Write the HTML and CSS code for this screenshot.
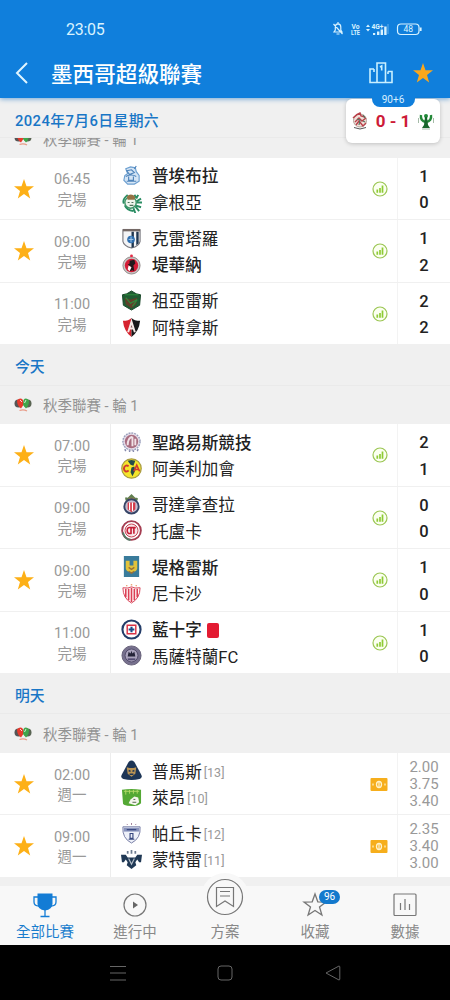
FILE: index.html
```
<!DOCTYPE html>
<html lang="zh-Hant">
<head>
<meta charset="utf-8">
<title>墨西哥超級聯賽</title>
<link rel="stylesheet" href="styles.css">
</head>
<body>
<svg class="defs" aria-hidden="true">
  <symbol id="star" viewBox="0 0 20 20"><path fill="currentColor" d="M10 0l2.500 7.200 7.500.1-6 4.700 2.200 7.500L10 15.100 3.800 19.500 6 12 0 7.300l7.500-.1z"/></symbol>
  <symbol id="stats" viewBox="0 0 16 16"><circle cx="8" cy="8" r="7" fill="#fbfff0" stroke="#9bc653" stroke-width="1.200"/><path d="M5.300 8.500v3.300M8 7v4.800M10.500 4.500v7.300" stroke="#8ecb35" stroke-width="1.700"/></symbol>
  <symbol id="cash" viewBox="0 0 18 13"><rect x=".5" width="17" height="13" rx="1" fill="#f6ae1c"/><ellipse cx="9" cy="6.500" rx="2.500" ry="3" fill="none" stroke="#fff3cd" stroke-width="1.300"/><path d="M9 3v7M3 5.500v2M15 5.500v2" stroke="#fff3cd" stroke-width="1.200"/></symbol>
  <symbol id="liga" viewBox="0 0 18 16"><circle cx="4.500" cy="6.500" r="4" fill="#555"/><circle cx="13.500" cy="6.500" r="4" fill="#596452"/><path d="M3 3.500Q6 0 9 3l1 4-3 4.500Q3 9 3 3.500z" fill="#e63a2d"/><path d="M15 3.500Q12 0 9.500 3L9 8l3 3.500q3-2.500 3-8z" fill="#40a54a"/><path d="M6 3l2 2M12 3l-1.500 3" stroke="#fff" stroke-width=".8"/><path d="M5.500 13.500q4-1.500 7.500.5" stroke="#e99b87" stroke-width="1.300" fill="none"/></symbol>

  <symbol id="puebla" viewBox="0 0 22 22"><path d="M5 4l5-2 5 1 1 4 3 4v6l-5 3H7l-4-4 1-5 3-2z" fill="#d5e5f5" stroke="#6c9fd0" stroke-width="1.200"/><path d="M6 6l5-1 3 3-5 2zM5 12q6-3 11 0M6 17h10M8 12v4h5v-4M14 4l2-3" fill="none" stroke="#4e83b9" stroke-width="1.200"/></symbol>
  <symbol id="santos" viewBox="0 0 22 22"><path d="M7 3Q1 8 3 12M4 14q2 5 9 6M14 3l2 3M18 3l-2 4M21 7l-5 3M22 11h-6M21 16l-6-2M19 20l-4-5M15 22l-2-5" fill="none" stroke="#2a8d63" stroke-width="2"/><circle cx="10" cy="11" r="6" fill="#eef5ec" stroke="#3d9568" stroke-width="1.500"/><path d="M6 5q4-5 9 0l-1 3H7z" fill="#947244"/><path d="M7 11h2M11 11h2M9 14h4" stroke="#4c725a" stroke-width="1.300"/></symbol>
  <symbol id="queretaro" viewBox="0 0 22 22"><path d="M2 2h18v12q-1 5-9 7-8-2-9-7z" fill="#f3f4f6" stroke="#7b7a80" stroke-width="1.200"/><path d="M2 1h18v2.500H2z" fill="#746966"/><path d="M11 4h2.500v16L11 21zM16 4h2.500v12L16 18z" fill="#20364f"/><circle cx="10.500" cy="12" r="4" fill="#2d6eaf"/><path d="M8 12h5M10.500 9v6" stroke="#a9cae8"/></symbol>
  <symbol id="tijuana" viewBox="0 0 22 22"><circle cx="11" cy="12" r="9" fill="#c9c3c2" stroke="#918b8b"/><circle cx="11" cy="12" r="7" fill="#d51c37"/><path d="M9 7l5-1 1 4-2 2 1 6-2-1-3 1 1-5-3-2 2-1z" fill="#211a1c"/><path d="M8 12l3 2-2 4-2-2z" fill="#fff"/><circle cx="11" cy="2" r="1.500" fill="#e52943"/></symbol>
  <symbol id="juarez" viewBox="0 0 22 22"><path d="M1.500 5l4.500-1 5-3 5 3 4.500 1-1 11-8.500 5-8.500-5z" fill="#205d33" stroke="#174527"/><path d="M4 8l6 2 7-2-1 7-5 4-6-4z" fill="#60402a"/><path d="M5 8l5 6 7-4-5 7M4 5h14" fill="none" stroke="#2d8b3c" stroke-width="1.200"/></symbol>
  <symbol id="atlas" viewBox="0 0 22 22"><path d="M2 4q6 0 9-3v20Q3 15 2 4z" fill="#d6232f"/><path d="M20 4q-6 0-9-3v20q8-6 9-17z" fill="#191719"/><path d="M7.500 16L11 5l3.500 11M8 12h6" fill="none" stroke="#f6e9e6" stroke-width="2"/></symbol>
  <symbol id="sanluis" viewBox="0 0 22 22"><circle cx="11" cy="10" r="9" fill="#e6dce8" stroke="#9ba1bd" stroke-width="1.500" stroke-dasharray="2 1"/><circle cx="11" cy="10" r="7" fill="#a86c7f"/><path d="M7 14q0-8 5-9M12 5v10M15 7v7" fill="none" stroke="#f1e2e7" stroke-width="2"/><path d="M4 18l1 2M9 19v2M13 19v2M18 18l-1 2" stroke="#8589ac" stroke-width="1.500"/></symbol>
  <symbol id="america" viewBox="0 0 22 22"><circle cx="11" cy="11" r="10.200" fill="#f4e52b" stroke="#a99c44" stroke-width="1.300"/><path d="M7 3l4-1 4 1-2 5-3-1zM11 10l3-1 1 4-3 6-2-4z" fill="#254b4a"/><path d="M8 8.500Q4 6.500 3 11q1 5 5 2" fill="none" stroke="#d23930" stroke-width="2"/><path d="M13.500 14l3-6.500 3 6.500M15 12h3" fill="none" stroke="#d23930" stroke-width="1.600"/></symbol>
  <symbol id="chivas" viewBox="0 0 22 22"><path d="M5 7Q3 2 7 4l4-4 4 4q4-1 2 3z" fill="#607f50"/><path d="M8 4h6v4H8z" fill="#b7884d"/><circle cx="11" cy="13" r="7.500" fill="#c6bed0" stroke="#354467" stroke-width="2"/><path d="M7 9v7l4 3 4-3V9z" fill="#d43b49"/><path d="M9 9v8M12 9v9" stroke="#fff" stroke-width="1.200"/></symbol>
  <symbol id="toluca" viewBox="0 0 22 22"><circle cx="11" cy="11" r="9.800" fill="#fff" stroke="#a43d51" stroke-width="2"/><path d="M2 13q2 7 8 8" stroke="#517c67" stroke-width="2" fill="none"/><circle cx="11" cy="11" r="6.800" fill="#f7e5e8" stroke="#c53c4e"/><path d="M10.500 8q-4-1-4 3t4 3V8h5M13.500 8v6.500" fill="none" stroke="#c51e36" stroke-width="1.700"/></symbol>
  <symbol id="tigres" viewBox="0 0 22 22"><path d="M3 0h16v22H3z" fill="#397b9b"/><path d="M5 5h4v5h4V5h4v8q-1 4-6 4t-6-4z" fill="#e2c33b"/><path d="M8 12l3 2 3-2M8 16l3 2 3-2" fill="none" stroke="#9a7138" stroke-width="1.500"/></symbol>
  <symbol id="necaxa" viewBox="0 0 22 22"><path d="M2 5q6 1 9-1 3 2 9 1 0 11-9 16Q2 16 2 5z" fill="#fff" stroke="#d84358"/><path d="M5 6v9M8 6v12M11 5v15M14 6v12M17 6v9" stroke="#dc4055" stroke-width="1.700"/><path d="M6 2v1.500M11 1v1.500M16 2v1.500" stroke="#eaa87a" stroke-width="1.500"/></symbol>
  <symbol id="cruzazul" viewBox="0 0 22 22"><circle cx="11" cy="11" r="9.500" fill="#fff" stroke="#243d69" stroke-width="2.200"/><path d="M6.500 6.500h9v9h-9z" fill="#fff" stroke="#da3346" stroke-width="1.500"/><path d="M11 8v6M8 11h6" stroke="#204c89" stroke-width="2.200"/></symbol>
  <symbol id="mazatlan" viewBox="0 0 22 22"><circle cx="11" cy="11" r="10" fill="#77718e" stroke="#666078"/><circle cx="11" cy="11" r="6.800" fill="#aaa3bc" stroke="#514b69"/><path d="M7 12l1-5 2 2 1-3 1 3 2-2 1 5z" fill="#252438"/><path d="M7 15h8" stroke="#554d73" stroke-width="2"/></symbol>
  <symbol id="pumas" viewBox="0 0 22 22"><path d="M8 2q3-3 6 0l7.500 14q1 3-2 4-8.500 2-17 0-3-1-2-4z" fill="#1d3556"/><path d="M6 7.500l3 1h4l3-1-1 7-4 3-4-3z" fill="#ba9454"/><path d="M8 11l2 1M14 11l-2 1M9 15h4" stroke="#1d3556" stroke-width="1.500"/></symbol>
  <symbol id="leon" viewBox="0 0 22 22"><path d="M1 3q10-2 20 0v14q-3 3-10 3-10 0-9-4z" fill="#54a834"/><path d="M3 4.500h16M5 3v5M9 3v4M13 3v4M17 3v4" stroke="#b3d968" stroke-width="1"/><path d="M10 13l4-3 4 1 1 5-4 3-7-2z" fill="#f4f6ed"/><path d="M13 13h2M12 16h4" stroke="#54624b"/></symbol>
  <symbol id="pachuca" viewBox="0 0 22 22"><path d="M2 4h18q1 12-9 17Q1 16 2 4z" fill="#eef1f9" stroke="#7279a3"/><path d="M3 5h16v4H3z" fill="#8792bb"/><path d="M9.500 11h3v5h-3zM8 17h6M6 7h10" stroke="#394980" stroke-width="1.200" fill="none"/><path d="M6 1l1 1M11 0v2M16 1l-1 1" stroke="#9d7b95"/></symbol>
  <symbol id="monterrey" viewBox="0 0 22 22"><path d="M0 6h5l2 3h8l2-3h5l-1 8h-2l-2-3-2 3 1 3-5 4-5-4 1-3-2-3-2 3H1z" fill="#203955"/><path d="M7 2v3M11 1v4M15 2v3" stroke="#6d7c90" stroke-width="1.800"/><path d="M8 10l3 6 3-6" fill="none" stroke="#b7c1cb" stroke-width="1.200"/></symbol>
  <symbol id="tijuana-live" viewBox="0 0 18 20"><circle cx="9" cy="9.500" r="6.500" fill="#f0dfd8" stroke="#b3a399"/><path d="M2 7q4-4 7-5l1 3 4 1M4 11l4-4 3 3 4-3M5 14l3-4 4 5 3-3" fill="none" stroke="#b9404a" stroke-width="1.400"/><path d="M12 4l2 3M6 8l3 1-1 5M12 10l2 1" fill="none" stroke="#577361" stroke-width="1.200"/><path d="M3 16.500q6 3 12 0" stroke="#555" fill="none"/></symbol>
  <symbol id="eagle-live" viewBox="0 0 18 20"><path d="M4 4q-1 6 5 7 6-1 5-7" fill="none" stroke="#238838" stroke-width="2.400"/><circle cx="9" cy="5" r="2" fill="#208a38"/><path d="M8 6h2l1 8 2 3H5l2-3z" fill="#17662b"/><path d="M1.500 7v5M16.500 7v5M5 18h8" stroke="#a6bba9"/></symbol>
</svg>

<div class="phone">
  <header class="top">
    <div class="status">
      <span class="clock">23:05</span>
      <svg class="status-icons" viewBox="0 0 92 16">
        <g fill="none" stroke="#d9f3ff" stroke-width="1.200">
          <path d="M2 11h8L8.800 9V6q0-3-2.800-3.200Q3.300 3 3.300 6v3zM6 1v2M4.500 13h3M1.500 3l9 10"/>
          <path d="M56 3v10" opacity=".35"/>
          <rect x="65.500" y="3" width="21.500" height="10.500" rx="3.500"/>
          <path d="M88.700 6.500v3.500" stroke-width="1.800"/>
        </g>
        <path d="M34 6l2-2.500L38 6zM34 8l2 2.500L38 8zM41 14v-2h2.200v2zM45 14v-3.500h2.400V14zM48.600 14V8.500H51V14zM52.200 14V5.500h2.400V14z" fill="#d9f3ff"/>
        <g class="tiny"><text x="19.500" y="7.500" textLength="8" lengthAdjust="spacingAndGlyphs">Vo</text><text x="19" y="14" textLength="9" lengthAdjust="spacingAndGlyphs">LTE</text><text x="39.500" y="7.500" textLength="12" lengthAdjust="spacingAndGlyphs">4G+</text></g>
        <text class="battery" x="71.500" y="11.300">48</text>
      </svg>
    </div>
    <div class="titlebar">
      <svg class="back" viewBox="0 0 14 22"><path d="M12 1L2 11l10 10" fill="none" stroke="#dff5ff" stroke-width="2"/></svg>
      <h1>墨西哥超級聯賽</h1>
      <svg class="podium" viewBox="0 0 24 22"><path d="M5 7H1v13.500h22V9.500h-4M8 20V1h8.500v19M5 7v3M19 9.500V12M11 5l1.700-1v4.500" fill="none" stroke="#c9f0ff" stroke-width="1.600"/></svg>
      <svg class="fav"><use href="#star"/></svg>
    </div>
  </header>

  <div class="live">
    <span class="minute">90+6</span>
    <div class="livescore"><svg><use href="#tijuana-live"/></svg><b>0 - 1</b><svg><use href="#eagle-live"/></svg></div>
  </div>

  <main>
    <h2 class="day sticky">2024年7月6日星期六</h2>
    <div class="clip"><div class="league"><svg><use href="#liga"/></svg>秋季聯賽 - 輪 1</div></div>

    <section class="match"><svg class="star"><use href="#star"/></svg><div class="when"><span>06:45</span><span>完場</span></div><div class="teams"><div class="team win"><svg><use href="#puebla"/></svg>普埃布拉</div><div class="team"><svg><use href="#santos"/></svg>拿根亞</div></div><svg class="mark"><use href="#stats"/></svg><div class="score"><span>1</span><span>0</span></div></section>
    <section class="match"><svg class="star"><use href="#star"/></svg><div class="when"><span>09:00</span><span>完場</span></div><div class="teams"><div class="team"><svg><use href="#queretaro"/></svg>克雷塔羅</div><div class="team win"><svg><use href="#tijuana"/></svg>堤華納</div></div><svg class="mark"><use href="#stats"/></svg><div class="score"><span>1</span><span>2</span></div></section>
    <section class="match"><i class="star"></i><div class="when"><span>11:00</span><span>完場</span></div><div class="teams"><div class="team"><svg><use href="#juarez"/></svg>祖亞雷斯</div><div class="team"><svg><use href="#atlas"/></svg>阿特拿斯</div></div><svg class="mark"><use href="#stats"/></svg><div class="score"><span>2</span><span>2</span></div></section>

    <h2 class="day">今天</h2>
    <div class="league"><svg><use href="#liga"/></svg>秋季聯賽 - 輪 1</div>
    <section class="match"><svg class="star"><use href="#star"/></svg><div class="when"><span>07:00</span><span>完場</span></div><div class="teams"><div class="team win"><svg><use href="#sanluis"/></svg>聖路易斯競技</div><div class="team"><svg><use href="#america"/></svg>阿美利加會</div></div><svg class="mark"><use href="#stats"/></svg><div class="score"><span>2</span><span>1</span></div></section>
    <section class="match"><i class="star"></i><div class="when"><span>09:00</span><span>完場</span></div><div class="teams"><div class="team"><svg><use href="#chivas"/></svg>哥達拿查拉</div><div class="team"><svg><use href="#toluca"/></svg>托盧卡</div></div><svg class="mark"><use href="#stats"/></svg><div class="score"><span>0</span><span>0</span></div></section>
    <section class="match"><svg class="star"><use href="#star"/></svg><div class="when"><span>09:00</span><span>完場</span></div><div class="teams"><div class="team win"><svg><use href="#tigres"/></svg>堤格雷斯</div><div class="team"><svg><use href="#necaxa"/></svg>尼卡沙</div></div><svg class="mark"><use href="#stats"/></svg><div class="score"><span>1</span><span>0</span></div></section>
    <section class="match"><i class="star"></i><div class="when"><span>11:00</span><span>完場</span></div><div class="teams"><div class="team win"><svg><use href="#cruzazul"/></svg>藍十字<i class="redcard"></i></div><div class="team"><svg><use href="#mazatlan"/></svg>馬薩特蘭FC</div></div><svg class="mark"><use href="#stats"/></svg><div class="score"><span>1</span><span>0</span></div></section>

    <h2 class="day">明天</h2>
    <div class="league"><svg><use href="#liga"/></svg>秋季聯賽 - 輪 1</div>
    <section class="match"><svg class="star"><use href="#star"/></svg><div class="when"><span>02:00</span><span>週一</span></div><div class="teams"><div class="team"><svg><use href="#pumas"/></svg>普馬斯<small>[13]</small></div><div class="team"><svg><use href="#leon"/></svg>萊昂<small>[10]</small></div></div><svg class="mark cash"><use href="#cash"/></svg><div class="odds"><span>2.00</span><span>3.75</span><span>3.40</span></div></section>
    <section class="match"><svg class="star"><use href="#star"/></svg><div class="when"><span>09:00</span><span>週一</span></div><div class="teams"><div class="team"><svg><use href="#pachuca"/></svg>帕丘卡<small>[12]</small></div><div class="team"><svg><use href="#monterrey"/></svg>蒙特雷<small>[11]</small></div></div><svg class="mark cash"><use href="#cash"/></svg><div class="odds"><span>2.35</span><span>3.40</span><span>3.00</span></div></section>
  </main>

  <nav class="tabs">
    <a class="active"><svg viewBox="0 0 26 26"><path d="M5.500 1.500h15v10q0 6-7.500 7-7.500-1-7.500-7z" fill="#137cd5"/><path d="M6 5H2v5q0 4 5 4M20 5h4v5q0 4-5 4M13 17v7M8.500 24.500h9" fill="none" stroke="#137cd5" stroke-width="1.300"/></svg>全部比賽</a>
    <a><svg viewBox="0 0 26 26"><circle cx="13" cy="13" r="11" fill="none" stroke="#777" stroke-width="1.200"/><path d="M11 9.500l5 3.500-5 3.500z" fill="#666"/></svg>進行中</a>
    <a class="plan"><svg viewBox="0 0 50 50"><circle cx="25" cy="25" r="24" fill="#f8f8f8"/><circle cx="25" cy="25" r="17.500" fill="none" stroke="#777" stroke-width="1.200"/><path d="M16.500 15.500h17v19L25 29l-8.500 5.500zM20 19.500h10M20 24h10" fill="none" stroke="#777" stroke-width="1.200"/></svg>方案</a>
    <a><svg viewBox="0 0 26 26"><path d="M13 2l2.800 7.800 8.200.2-6.500 5 2.400 8-6.900-4.500L6.100 23l2.400-8L2 10l8.200-.2z" fill="none" stroke="#777" stroke-width="1.300"/></svg><span class="badge">96</span>收藏</a>
    <a><svg viewBox="0 0 26 26"><rect x="2" y="2" width="22" height="21.500" rx="1" fill="none" stroke="#777" stroke-width="1.200"/><path d="M8.500 11v7M13 7v11M17.500 12v6" stroke="#777" stroke-width="1.200"/></svg>數據</a>
  </nav>
  <div class="system">
    <svg viewBox="0 0 16 16"><path d="M0 1.500h16M0 8h16M0 15h16" stroke="#666"/></svg>
    <svg viewBox="0 0 16 16"><rect x="1" y="1" width="14" height="14" rx="3" fill="none" stroke="#666"/></svg>
    <svg viewBox="0 0 16 16"><path d="M1 8l13-7q.8 0 .8 1v12q0 1-.8 1z" fill="none" stroke="#666"/></svg>
  </div>
</div>
</body>
</html>
```

FILE: styles.css
```
* { box-sizing: border-box; }
body { margin: 0; font-family: Roboto, "Noto Sans CJK TC", sans-serif; }
svg { display: block; flex: none; }
.defs { position: absolute; width: 0; height: 0; }
.phone { position: relative; width: 450px; height: 1000px; overflow: hidden; background: #f0f0f0; display: flex; flex-direction: column; }

.top { height: 98px; flex: none; background: #107fdc; box-shadow: 0 1px 5px #6fa5d4; position: relative; }
.status { height: 48px; padding: 10px 26px 0 66px; display: flex; justify-content: space-between; align-items: center; color: #d9f3ff; }
.clock { font-size: 16px; letter-spacing: -.3px; }
.status-icons { width: 92px; height: 16px; }
.tiny { font-size: 7px; font-weight: 700; fill: #d9f3ff; }
.battery { font-size: 8.500px; fill: #d9f3ff; }
.titlebar { height: 50px; padding: 0 17px 0 15px; display: flex; align-items: center; }
.back { width: 14px; height: 22px; }
h1 { margin: 0 auto 0 22px; padding-top: 3px; font-size: 21.600px; line-height: 30px; font-weight: 500; color: #fff; }
.podium { width: 24px; height: 22px; margin-right: 20px; }
.fav { width: 20px; height: 20px; color: #faa71b; }

.live { position: absolute; left: 346px; top: 92px; width: 94px; height: 51px; padding-top: 7px; display: flex; flex-direction: column; align-items: center; z-index: 2; }
.live::before { content: ""; position: absolute; inset: 7px 0 0; border-radius: 6px; background: #fff; box-shadow: 0 1px 4px #0003; }
.minute { position: absolute; top: 0; width: 43px; height: 15px; line-height: 15px; text-align: center; background: #107fdc; color: #d9efff; font-size: 10px; border-radius: 0 0 8px 8px; }
.livescore { position: relative; width: 100%; height: 44px; padding: 0 5px; display: flex; align-items: center; justify-content: space-between; }
.livescore svg { width: 18px; height: 20px; }
.livescore b { font-size: 17px; font-weight: 700; color: #cd1b38; }

main { height: 788px; flex: none; overflow: hidden; }
.day { margin: 0; height: 40.400px; padding: 3px 15px 0; line-height: 37px; font-size: 14.800px; line-height: 39px; font-weight: 500; color: #1976c6; border-bottom: 1px solid #eaeaea; }
.sticky { letter-spacing: .4px; line-height: 40px; }
.clip { height: 19.600px; display: flex; flex-direction: column; justify-content: flex-end; overflow: hidden; }
.league { height: 38.800px; flex: none; padding-left: 14px; display: flex; align-items: center; gap: 11px; font-size: 14.500px; color: #939393; }
.league svg { width: 18px; height: 16px; }
.match { height: 62.400px; display: flex; align-items: stretch; background: #fff; border-bottom: 1px solid #f0f0f0; }
.match > .star { width: 20px; height: 20px; margin: 21px 0 0 14px; color: #fdb017; }
.when { width: 77px; padding-top: 12.500px; display: flex; flex-direction: column; align-items: center; font-size: 14.500px; line-height: 20.500px; color: #999; border-right: 1px solid #ededed; }
.teams { flex: 1; padding: 6.500px 0 0 10px; color: #222; }
.team { height: 26.500px; display: flex; align-items: center; font-size: 16.600px; line-height: 26.500px; white-space: nowrap; }
.team svg { width: 21px; height: 21px; margin: -4px 10px 0 0; }
.team.win { font-weight: 500; }
.team small { font-size: 12.500px; color: #999; margin-left: 2px; }
.redcard { width: 12px; height: 15px; margin: -2px 0 0 5px; border-radius: 2px; background: #e31b32; }
.mark { width: 16px; height: 16px; margin: 23px 9px 0 0; }
.mark.cash { width: 18px; height: 13px; margin-top: 25px; }
.score, .odds { width: 53px; border-left: 1px solid #f3f3f3; display: flex; flex-direction: column; align-items: center; }
.score { padding-top: 6px; font-size: 16.500px; font-weight: 500; line-height: 26.500px; color: #222; }
.odds { padding-top: 6px; font-size: 15px; line-height: 17px; color: #999; }

.tabs { height: 59px; flex: none; display: flex; background: #f8f8f8; }
.tabs a { position: relative; flex: 1; display: flex; flex-direction: column; align-items: center; gap: 5px; padding-top: 6px; font-size: 14.500px; line-height: 20px; color: #888; }
.tabs a.active { color: #197dcd; }
.tabs svg { width: 26px; height: 26px; }
.tabs .plan svg { width: 50px; height: 50px; margin: -20px 0 -4px; }
.badge { position: absolute; left: 49px; top: 4px; width: 21px; height: 14px; border-radius: 7px; background: #1379cd; color: #fff; font-size: 10px; line-height: 14px; text-align: center; }
.system { height: 55px; flex: none; background: #000; display: flex; justify-content: center; align-items: center; gap: 91.500px; }
.system svg { width: 16px; height: 16px; }
```
